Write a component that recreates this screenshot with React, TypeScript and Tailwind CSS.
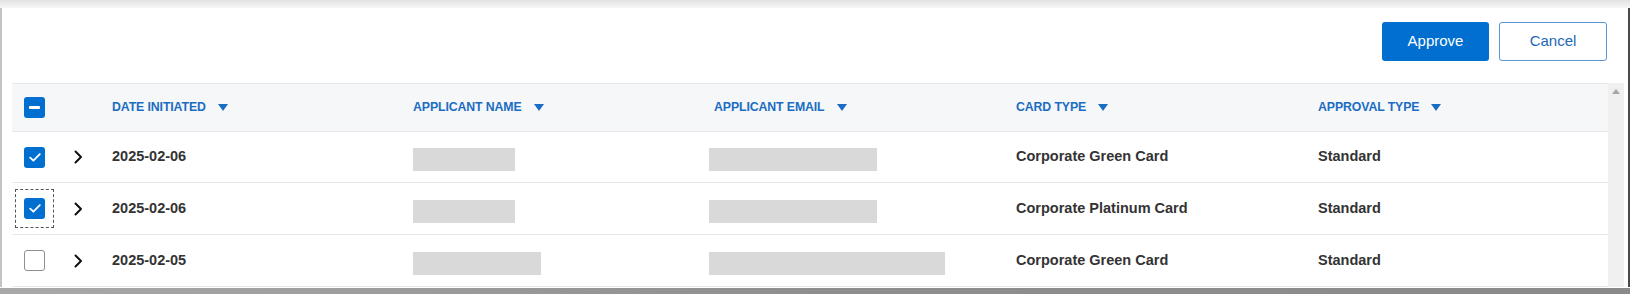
import React from 'react'

type Row = {
  id: number
  date: string
  nameMask: number
  emailMask: number
  cardType: string
  approvalType: string
  checked: boolean
  focused?: boolean
}

const rows: Row[] = [
  { id: 1, date: '2025-02-06', nameMask: 102, emailMask: 168, cardType: 'Corporate Green Card', approvalType: 'Standard', checked: true },
  { id: 2, date: '2025-02-06', nameMask: 102, emailMask: 168, cardType: 'Corporate Platinum Card', approvalType: 'Standard', checked: true, focused: true },
  { id: 3, date: '2025-02-05', nameMask: 128, emailMask: 236, cardType: 'Corporate Green Card', approvalType: 'Standard', checked: false },
]

const columns = ['DATE INITIATED', 'APPLICANT NAME', 'APPLICANT EMAIL', 'CARD TYPE', 'APPROVAL TYPE']

// widths of the five data columns, left to right
const colWidths = ['w-[301px]', 'w-[301px]', 'w-[302px]', 'w-[302px]', 'flex-1']

function SortArrow() {
  return (
    <svg width="10" height="7" viewBox="0 0 10 7" className="ml-3 shrink-0">
      <path d="M0 0h10L5 7z" fill="#1a6dc2" />
    </svg>
  )
}

function Checkbox({ state, focused }: { state: 'checked' | 'unchecked' | 'mixed'; focused?: boolean }) {
  const box =
    state === 'unchecked' ? (
      <span className="block w-[21px] h-[21px] rounded-[3px] border border-[#8f8f8f] bg-white" />
    ) : (
      <span className="flex items-center justify-center w-[21px] h-[21px] rounded-[3px] bg-[#006fcf]">
        {state === 'mixed' ? (
          <span className="block w-[11px] h-[3px] bg-white rounded-[1px]" />
        ) : (
          <svg width="12" height="9" viewBox="0 0 12 9">
            <path d="M1.2 4.6l3.2 3.1 6.4-6.5" fill="none" stroke="white" strokeWidth="1.8" strokeLinecap="round" strokeLinejoin="round" />
          </svg>
        )}
      </span>
    )

  // square dashed focus ring sits on a wrapper so it doesn't follow the radius
  return focused ? <span className="block outline-dashed outline-1 outline-offset-8 outline-[#555]">{box}</span> : box
}

function Chevron() {
  return (
    <svg width="9" height="14" viewBox="0 0 9 14">
      <path d="M1.5 1.5l5.5 5.5-5.5 5.5" fill="none" stroke="#111" strokeWidth="2" strokeLinecap="round" strokeLinejoin="round" />
    </svg>
  )
}

function Mask({ width, offset }: { width: number; offset?: boolean }) {
  return (
    <span
      className={`block h-[23px] mt-[5px] bg-[#d9d9d9] ${offset ? '-ml-[5px]' : ''}`}
      style={{ width }}
    />
  )
}

export default function App() {
  return (
    <div
      className="w-[1630px] h-[294px] overflow-hidden bg-white flex flex-col"
      style={{ fontFamily: '"Liberation Sans", Arial, sans-serif' }}
    >
      {/* top edge of window */}
      <div className="h-[8px] shrink-0 bg-gradient-to-b from-[#e2e2e2] to-[#f6f6f6]" />

      <div className="flex-1 flex border-l-[2px] border-l-[#c4c4c4] border-r-[2px] border-r-[#4a4a4a]">
        <div className="flex-1 flex flex-col">
          {/* Actions */}
          <div className="flex justify-end gap-[10px] mt-[14px] pr-[21px]">
            <button className="w-[107px] h-[39px] rounded-[3px] bg-[#006fcf] text-white text-[15px]">
              Approve
            </button>
            <button className="w-[108px] h-[39px] rounded-[3px] border border-[#5b95d3] bg-white text-[#1d68b8] text-[15px]">
              Cancel
            </button>
          </div>

          {/* Table */}
          <div className="flex mt-[22px] pl-[10px]">
            <div className="w-[1596px]">
              <div className="flex items-center h-[49px] bg-[#f6f7f9] border-y border-[#e6e8eb]">
                <div className="w-[50px] pl-3 flex items-center">
                  <Checkbox state="mixed" />
                </div>
                <div className="w-[50px]" />
                {columns.map((col, i) => (
                  <div key={col} className={`${colWidths[i]} flex items-center`}>
                    <span className="text-[12.3px] font-bold text-[#1a6dc2] tracking-[-0.1px]">{col}</span>
                    <SortArrow />
                  </div>
                ))}
              </div>

              {rows.map((row, idx) => (
                <div
                  key={row.id}
                  className={`flex items-center border-b border-[#e8e8e8] ${idx === 0 ? 'h-[51px]' : 'h-[52px]'}`}
                >
                  <div className="w-[50px] pl-3 flex items-center">
                    <Checkbox state={row.checked ? 'checked' : 'unchecked'} focused={row.focused} />
                  </div>
                  <div className="w-[50px] pl-3 flex items-center">
                    <Chevron />
                  </div>
                  <div className={`${colWidths[0]} text-[14.5px] font-bold text-[#333]`}>{row.date}</div>
                  <div className={colWidths[1]}>
                    <Mask width={row.nameMask} />
                  </div>
                  <div className={colWidths[2]}>
                    <Mask width={row.emailMask} offset />
                  </div>
                  <div className={`${colWidths[3]} text-[14.5px] font-bold text-[#333]`}>{row.cardType}</div>
                  <div className={`${colWidths[4]} text-[14.5px] font-bold text-[#333]`}>{row.approvalType}</div>
                </div>
              ))}
            </div>

            {/* Scrollbar */}
            <div className="w-[16px] bg-[#f0f0f0] flex justify-center pt-[6px]">
              <svg width="8" height="5" viewBox="0 0 8 5">
                <path d="M0 5L4 0l4 5z" fill="#a6a6a6" />
              </svg>
            </div>
          </div>
        </div>
      </div>

      {/* bottom edge of window */}
      <div className="h-[7px] shrink-0 mt-[1px] bg-gradient-to-r from-[#a9a9a9] via-[#8e8e8e] to-[#8a8a8a]" />
    </div>
  )
}
